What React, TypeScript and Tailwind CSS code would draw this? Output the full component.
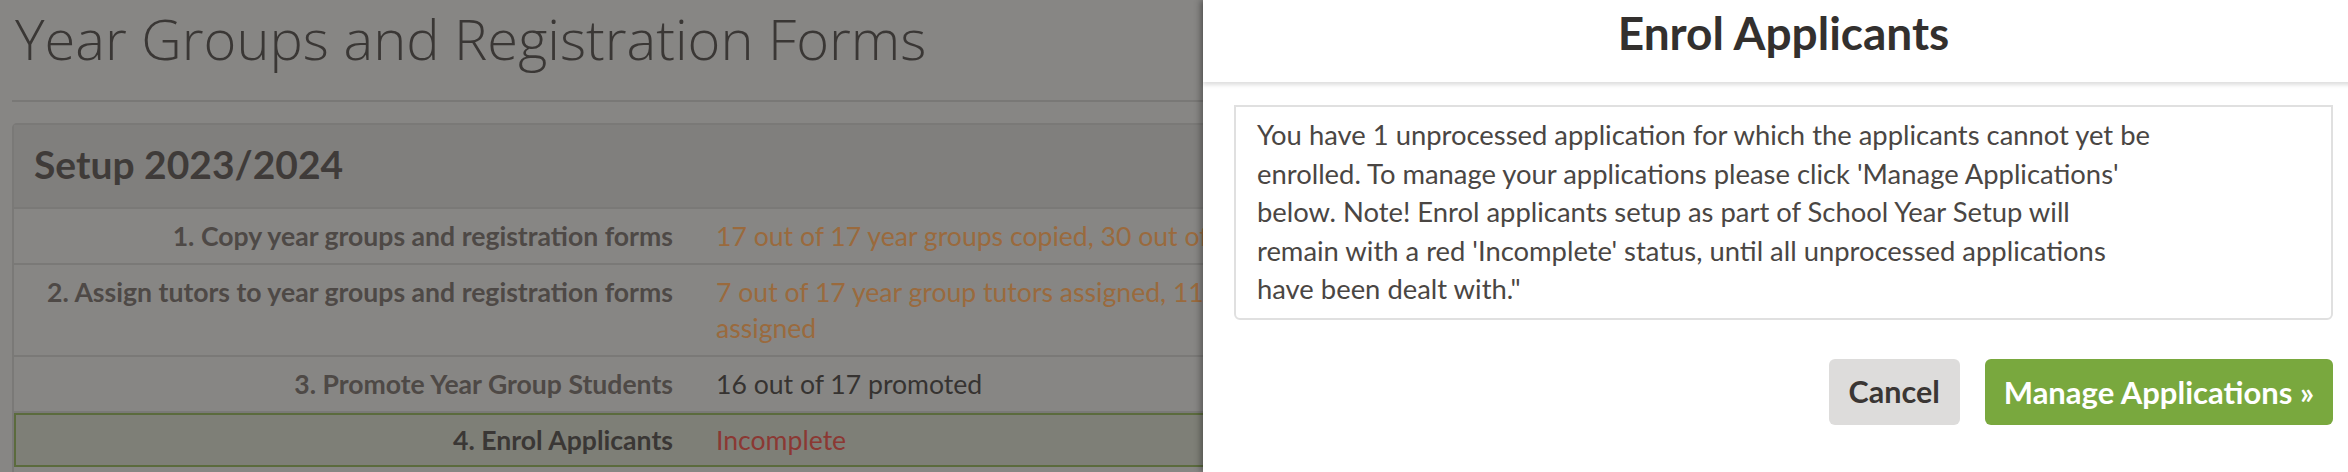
import React from "react";

type Row = { label: string; value: React.ReactNode; tone: "warn" | "ok" | "bad" };

const rows: Row[] = [
  {
    label: "1. Copy year groups and registration forms",
    value: "17 out of 17 year groups copied, 30 out of 30 registration forms copied",
    tone: "warn",
  },
  {
    label: "2. Assign tutors to year groups and registration forms",
    value: (
      <>
        <span className="whitespace-nowrap">7 out of 17 year group tutors assigned, 11 out of 30 registration form tutors</span>
        <br />
        assigned
      </>
    ),
    tone: "warn",
  },
  { label: "3. Promote Year Group Students", value: "16 out of 17 promoted", tone: "ok" },
];

const toneClass = {
  warn: "text-[#9a6a3d]",
  ok: "text-[#363331]",
  bad: "text-[#8b3833]",
};

function EnrolModal() {
  return (
    <div className="absolute top-0 left-[1203px] w-[1161px] h-[472px] bg-white shadow-[-3px_0_6px_rgba(0,0,0,0.3)]">
      {/* Header */}
      <div className="relative z-10 h-[82px] pt-[6px] text-center bg-white shadow-[0_3px_4px_rgba(0,0,0,0.13)]">
        <h2 className="text-[46px] leading-[54px] font-bold text-[#33302e]">Enrol Applicants</h2>
      </div>

      {/* Body */}
      <div className="mx-[31px] mt-[23px] h-[215px] border-2 border-[#e0e0e0] rounded-b-[6px] pl-[21px] pt-[9px] text-[27.4px] leading-[38.5px] text-[#4a4643] whitespace-nowrap">
        You have 1 unprocessed application for which the applicants cannot yet be
        <br />
        enrolled. To manage your applications please click 'Manage Applications'
        <br />
        below. Note! Enrol applicants setup as part of School Year Setup will
        <br />
        remain with a red 'Incomplete' status, until all unprocessed applications
        <br />
        have been dealt with."
      </div>

      {/* Footer */}
      <div className="mt-[39px] mr-[31px] flex justify-end gap-[25px]">
        <button className="h-[66px] px-[20px] rounded-[6px] bg-[#dddcdb] text-[30.5px] font-bold text-[#3a3634]">
          Cancel
        </button>
        <button className="h-[66px] px-[19px] rounded-[6px] bg-[#79a83e] text-[31px] font-bold text-white">
          Manage Applications »
        </button>
      </div>
    </div>
  );
}

export default function App() {
  return (
    <div className="relative w-[2348px] h-[472px] overflow-hidden bg-[#878684] font-['Lato',sans-serif]">
      <div className="w-[1203px] overflow-hidden pl-[12px]">
        <h1 className="ml-[3px] pt-[3px] font-['Open_Sans',sans-serif] font-light text-[56px] leading-[70px] text-[#3a3735] whitespace-nowrap">
          Year Groups and Registration Forms
        </h1>
        <div className="mt-[27px] h-[2px] w-[1600px] bg-[#797876]" />

        {/* Setup panel */}
        <div className="mt-[21px] w-[1600px] border-2 border-[#7a7977] rounded-t-[5px]">
          <div className="h-[84px] pl-[20px] pt-[15px] bg-[#807f7d] border-b-2 border-[#7a7977]">
            <h3 className="text-[39px] leading-[48px] font-bold text-[#3f3b39]">Setup 2023/2024</h3>
          </div>

          {rows.map((r) => (
            <div key={r.label} className="grid grid-cols-[681px_1fr] border-b-2 border-[#7a7977] py-[9px] leading-[36px]">
              <div className="pr-[22px] text-right text-[26.6px] font-bold text-[#4e4946] whitespace-nowrap">{r.label}</div>
              <div className={`pl-[21px] text-[26.6px] whitespace-nowrap ${toneClass[r.tone]}`}>{r.value}</div>
            </div>
          ))}

          <div className="grid grid-cols-[679px_1fr] border-2 border-[#5b6b3d] bg-[#7e7f77] py-[7px] leading-[36px]">
            <div className="pr-[22px] text-right text-[26.6px] font-bold text-[#3a3735]">4. Enrol Applicants</div>
            <div className={`pl-[21px] text-[26.6px] ${toneClass.bad}`}>Incomplete</div>
          </div>
          <div className="h-[40px]" />
        </div>
      </div>

      <EnrolModal />
    </div>
  );
}
